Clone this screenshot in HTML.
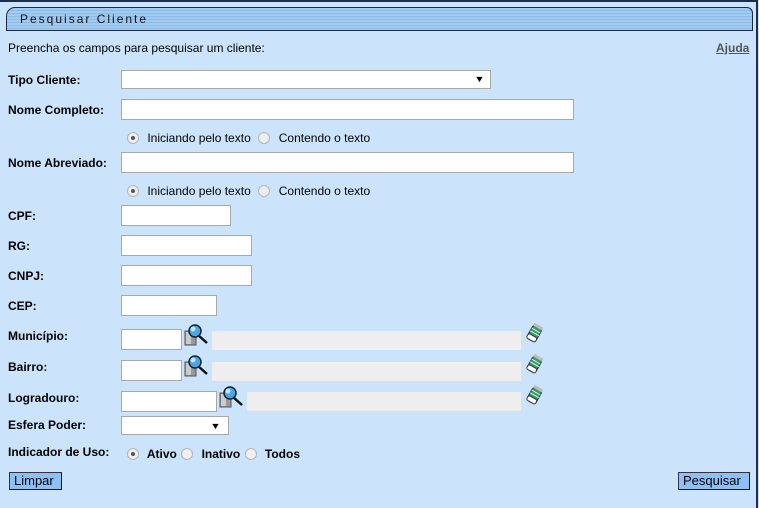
<!DOCTYPE html>
<html><head><meta charset="utf-8"><style>
*{margin:0;padding:0;box-sizing:border-box}
body{width:759px;height:508px;background:#cbe4fc;font-family:"Liberation Sans",Arial,sans-serif;font-size:12px;color:#000;position:relative;overflow:hidden}
.a{position:absolute}
.frame{left:0;top:0;width:758px;height:508px;border-top:2px solid #1c2f4a;border-right:2px solid #1c2f4a}
.hdr{left:6px;top:7px;width:747px;height:24px;border:1px solid #1a2a40;border-radius:9px 6px 0 0;background:repeating-linear-gradient(#a2cbf0 0 2px,#8cbbea 2px 3px);}
.hdr span{position:absolute;left:13px;top:4px;font-size:12px;letter-spacing:2px;color:#111}
.lbl{left:8px;font-weight:bold}
.in{background:#fff;border:1px solid #a8a8a8;height:21px}
.gr{background:#eeeeee;height:19px}
.rad{display:inline-block;width:12px;height:12px;border-radius:50%;border:1px solid #b5b5b5;background:#eee;vertical-align:-2px;position:relative;margin:0 5px 0 1px}
.rad.on::after{content:"";position:absolute;left:3px;top:3px;width:4px;height:4px;border-radius:50%;background:#555}
.btn{background:#8ec0f8;border:1px solid #334;border-right-color:#111;border-bottom-color:#111;height:18px;font-size:13px;line-height:16px;padding:0 4px}
.arr{position:absolute;font-size:9px;transform:scaleX(1.2)}
</style></head><body>
<div class="a frame"></div>
<div class="a hdr"><span>Pesquisar Cliente</span></div>
<div class="a" style="left:8px;top:41px">Preencha os campos para pesquisar um cliente:</div>
<div class="a" style="left:716px;top:41px;font-weight:bold;color:#555;text-decoration:underline">Ajuda</div>

<div class="a lbl" style="top:73px">Tipo Cliente:</div>
<div class="a in" style="left:121px;top:70px;width:370px;height:19px"><span class="arr" style="right:6px;top:3px">▼</span></div>
<div class="a lbl" style="top:103px">Nome Completo:</div>
<div class="a in" style="left:121px;top:99px;width:453px"></div>
<div class="a" style="left:126px;top:131px"><span class="rad on"></span> Iniciando pelo texto&nbsp; <span class="rad"></span> Contendo o texto</div>
<div class="a lbl" style="top:156px">Nome Abreviado:</div>
<div class="a in" style="left:121px;top:152px;width:453px"></div>
<div class="a" style="left:126px;top:184px"><span class="rad on"></span> Iniciando pelo texto&nbsp; <span class="rad"></span> Contendo o texto</div>

<div class="a lbl" style="top:209px">CPF:</div>
<div class="a in" style="left:121px;top:205px;width:110px"></div>
<div class="a lbl" style="top:239px">RG:</div>
<div class="a in" style="left:121px;top:235px;width:131px"></div>
<div class="a lbl" style="top:269px">CNPJ:</div>
<div class="a in" style="left:121px;top:265px;width:131px"></div>
<div class="a lbl" style="top:299px">CEP:</div>
<div class="a in" style="left:121px;top:295px;width:96px"></div>

<div class="a lbl" style="top:329px">Município:</div>
<div class="a in" style="left:121px;top:329px;width:61px"></div>
<div class="a lbl" style="top:360px">Bairro:</div>
<div class="a in" style="left:121px;top:360px;width:61px"></div>
<div class="a lbl" style="top:391px">Logradouro:</div>
<div class="a in" style="left:121px;top:391px;width:96px"></div>
<div class="a gr" style="left:212px;top:331px;width:309px"></div>
<div class="a gr" style="left:212px;top:362px;width:309px"></div>
<div class="a gr" style="left:247px;top:392px;width:274px"></div>

<svg class="a" style="left:184px;top:323px" width="26" height="26"><rect x="1" y="8" width="11" height="14" fill="#999" stroke="#555"/><rect x="2" y="9" width="5" height="12" fill="#ccc"/><line x1="14" y1="12" x2="23" y2="20" stroke="#111" stroke-width="2.5"/><circle cx="11" cy="8" r="6" fill="#4aa8e0" stroke="#123" stroke-width="1.5"/><circle cx="9" cy="6" r="2.5" fill="#bfe6ff"/></svg>
<svg class="a" style="left:184px;top:354px" width="26" height="26"><rect x="1" y="8" width="11" height="14" fill="#999" stroke="#555"/><rect x="2" y="9" width="5" height="12" fill="#ccc"/><line x1="14" y1="12" x2="23" y2="20" stroke="#111" stroke-width="2.5"/><circle cx="11" cy="8" r="6" fill="#4aa8e0" stroke="#123" stroke-width="1.5"/><circle cx="9" cy="6" r="2.5" fill="#bfe6ff"/></svg>
<svg class="a" style="left:219px;top:385px" width="26" height="26"><rect x="1" y="8" width="11" height="14" fill="#999" stroke="#555"/><rect x="2" y="9" width="5" height="12" fill="#ccc"/><line x1="14" y1="12" x2="23" y2="20" stroke="#111" stroke-width="2.5"/><circle cx="11" cy="8" r="6" fill="#4aa8e0" stroke="#123" stroke-width="1.5"/><circle cx="9" cy="6" r="2.5" fill="#bfe6ff"/></svg>

<svg class="a" style="left:524px;top:323px" width="20" height="22"><g transform="rotate(30 10 11)"><rect x="5" y="2" width="10" height="16" rx="4" fill="#3a9a6a" stroke="#333"/><rect x="5" y="13" width="10" height="5" rx="2" fill="#fff" stroke="#333"/><line x1="5" y1="7" x2="15" y2="7" stroke="#cfe" /><line x1="5" y1="10" x2="15" y2="10" stroke="#cfe"/><rect x="5" y="1" width="10" height="3" fill="#bbb"/></g></svg>
<svg class="a" style="left:524px;top:354px" width="20" height="22"><g transform="rotate(30 10 11)"><rect x="5" y="2" width="10" height="16" rx="4" fill="#3a9a6a" stroke="#333"/><rect x="5" y="13" width="10" height="5" rx="2" fill="#fff" stroke="#333"/><line x1="5" y1="7" x2="15" y2="7" stroke="#cfe" /><line x1="5" y1="10" x2="15" y2="10" stroke="#cfe"/><rect x="5" y="1" width="10" height="3" fill="#bbb"/></g></svg>
<svg class="a" style="left:524px;top:385px" width="20" height="22"><g transform="rotate(30 10 11)"><rect x="5" y="2" width="10" height="16" rx="4" fill="#3a9a6a" stroke="#333"/><rect x="5" y="13" width="10" height="5" rx="2" fill="#fff" stroke="#333"/><line x1="5" y1="7" x2="15" y2="7" stroke="#cfe" /><line x1="5" y1="10" x2="15" y2="10" stroke="#cfe"/><rect x="5" y="1" width="10" height="3" fill="#bbb"/></g></svg>

<div class="a lbl" style="top:418px">Esfera Poder:</div>
<div class="a in" style="left:121px;top:416px;width:108px;height:19px"><span class="arr" style="right:8px;top:4px">▼</span></div>
<div class="a lbl" style="top:445px">Indicador de Uso:</div>
<div class="a" style="left:126px;top:447px;font-weight:bold"><span class="rad on"></span> Ativo <span class="rad"></span> Inativo <span class="rad"></span> Todos</div>

<div class="a btn" style="left:9px;top:472px;width:53px">Limpar</div>
<div class="a btn" style="left:678px;top:472px;width:72px">Pesquisar</div>
</body></html>
